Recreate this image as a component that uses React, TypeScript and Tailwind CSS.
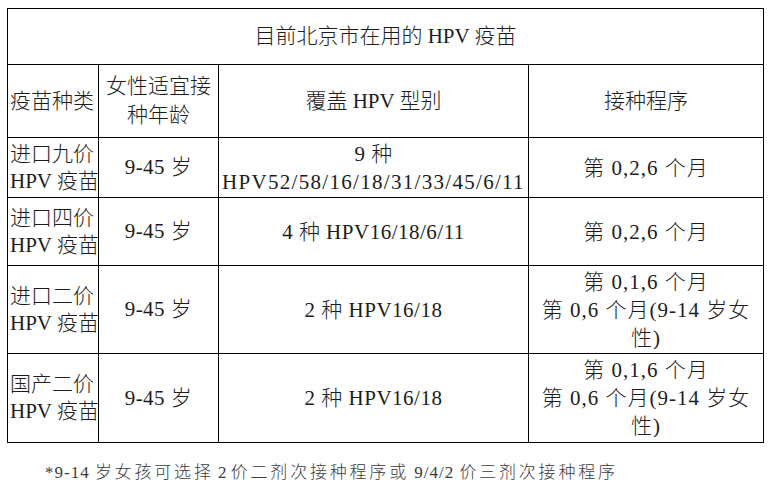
import React from "react";

type Row = {
  name: [string, string];
  age: string;
  types: string[];
  schedule: string[];
  h: string;
};

const rows: Row[] = [
  {
    name: ["进口九价", "HPV 疫苗"],
    age: "9-45 岁",
    types: ["9 种", "HPV52/58/16/18/31/33/45/6/11"],
    schedule: ["第 0,2,6 个月"],
    h: "h-[60px]",
  },
  {
    name: ["进口四价", "HPV 疫苗"],
    age: "9-45 岁",
    types: ["4 种 HPV16/18/6/11"],
    schedule: ["第 0,2,6 个月"],
    h: "h-[68px]",
  },
  {
    name: ["进口二价", "HPV 疫苗"],
    age: "9-45 岁",
    types: ["2 种 HPV16/18"],
    schedule: ["第 0,1,6 个月", "第 0,6 个月(9-14 岁女", "性)"],
    h: "h-[88px]",
  },
  {
    name: ["国产二价", "HPV 疫苗"],
    age: "9-45 岁",
    types: ["2 种 HPV16/18"],
    schedule: ["第 0,1,6 个月", "第 0,6 个月(9-14 岁女", "性)"],
    h: "h-[89px]",
  },
];

const cell = "border border-black align-middle p-0";

export default function App() {
  return (
    <div className="w-[770px] h-[494px] bg-white text-[#1c1c1c] font-light font-[Liberation_Serif,Noto_Sans_CJK_SC,serif] overflow-hidden">
      <div className="pl-[7px] pt-[8px]">
        <table className="border-collapse table-fixed w-[756px] text-[21px] leading-[27px]">
          <colgroup>
            <col className="w-[91px]" />
            <col className="w-[120px]" />
            <col className="w-[310px]" />
            <col className="w-[235px]" />
          </colgroup>
          <tbody>
            <tr className="h-[56px]">
              <td colSpan={4} className={`${cell} text-center`}>
                目前北京市在用的 HPV 疫苗
              </td>
            </tr>
            <tr className="h-[73px]">
              <td className={`${cell} text-left pl-[2px]`}>疫苗种类</td>
              <td className={`${cell} text-center leading-[29px]`}>
                <div>女性适宜接</div>
                <div>种年龄</div>
              </td>
              <td className={`${cell} text-center`}>覆盖 HPV 型别</td>
              <td className={`${cell} text-center`}>接种程序</td>
            </tr>
            {rows.map((r, i) => (
              <tr key={i} className={r.h}>
                <td className={`${cell} text-left pl-[2px] whitespace-nowrap`}>
                  <div>{r.name[0]}</div>
                  <div>{r.name[1]}</div>
                </td>
                <td className={`${cell} text-center tracking-[0.5px]`}>{r.age}</td>
                <td className={`${cell} text-center leading-[28px]`}>
                  {r.types.map((t, j) => (
                    <div
                      key={j}
                      className={t.length > 20 ? "tracking-[1.3px] whitespace-nowrap" : "tracking-[0.5px] whitespace-nowrap"}
                    >
                      {t}
                    </div>
                  ))}
                </td>
                <td className={`${cell} text-center leading-[28px]`}>
                  {r.schedule.map((s, j) => (
                    <div key={j} className="whitespace-nowrap tracking-[1px]">
                      {s}
                    </div>
                  ))}
                </td>
              </tr>
            ))}
          </tbody>
        </table>
      </div>
      <div className="pl-[45px] pt-[18px] text-[17px] leading-[24px] text-[#3a3a3a] whitespace-nowrap">
        <span className="tracking-[1px]">*9-14 </span>
        <span className="tracking-[2.8px]">岁女孩可选择</span>
        <span> 2 </span>
        <span className="tracking-[2.8px]">价二剂次接种程序或</span>
        <span className="tracking-[1px]"> 9/4/2 </span>
        <span className="tracking-[2.8px]">价三剂次接种程序</span>
      </div>
    </div>
  );
}
